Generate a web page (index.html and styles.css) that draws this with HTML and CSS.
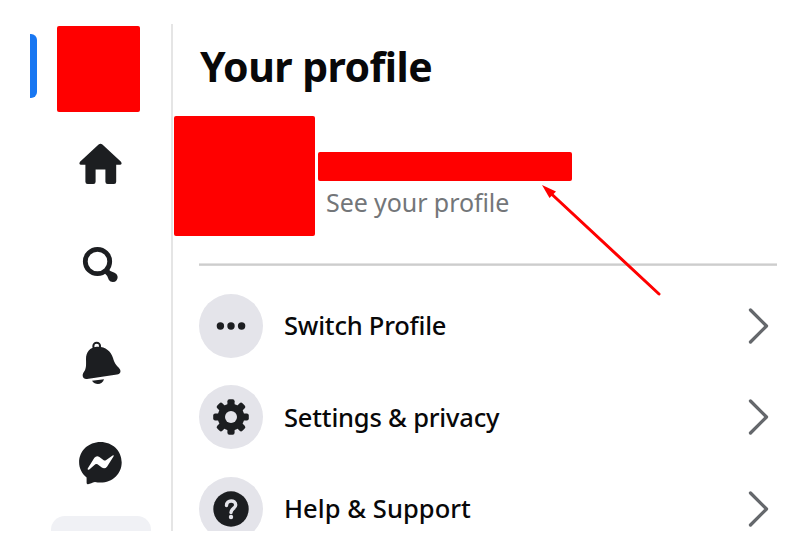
FILE: index.html
```
<!DOCTYPE html>
<html lang="en">
<head>
<meta charset="utf-8">
<title>Your profile</title>
<link rel="stylesheet" href="styles.css">
</head>
<body>
<div class="window">
  <nav class="rail">
    <div class="rail-account">
      <span class="active-bar"></span>
      <span class="avatar-small"></span>
    </div>
    <a class="rail-item"><svg width="60" height="60" viewBox="70 134 60 60"><path d="M98.600 144.500q1.900-1.600 3.800 0l18.600 17.300q1.600 2.700-1 3h-3.800v17q0 2.200-2.200 2.200h-6.400q-2.200 0-2.200-2.200v-12.300h-9.800v12.300q0 2.200-2.200 2.200H87.600q-2.200 0-2.200-2.200v-17h-4.400q-2.600-.3-1-3z"/></svg></a>
    <a class="rail-item"><svg width="60" height="60" viewBox="70 234 60 60"><circle cx="97.500" cy="261.500" r="12.200" fill="none" stroke="#1c1e21" stroke-width="4.800"/><path d="M104.500 273l3.500-4q2 2.500 6.500 3.800a4.800 4.800 0 1 1-5.600 7.200q-1.200-4.500-4.400-7z"/></svg></a>
    <a class="rail-item"><svg width="60" height="60" viewBox="70 334 60 60"><circle cx="96.700" cy="346.200" r="3.400" fill="none" stroke="#1c1e21" stroke-width="2"/><path d="M86 359c0-7 4-11.400 10.500-12.200 8-.8 14.500 4.200 16.500 11.200 1.400 5 3 7 5.800 9.800 3 3.200 1.700 6.200-1.800 6.800l-30 4.300c-4.300.6-5.600-3.800-3-7.100 2.200-3 2.200-6.500 2-12.800z"/><path d="M92 380.800l12-1.500c-1.400 5.500-8.600 6.500-12 1.500z"/></svg></a>
    <a class="rail-item"><svg width="60" height="60" viewBox="70 434 60 60"><path d="M100.500 442c12 0 21.200 8.800 21.200 20.300s-9.200 20.300-21.200 20.300q-3 0-5.500-.5c-3 .7-4.500 2-7 2.200q-1.400 0-1.400-1.500v-5.300c-4.500-3.700-7.500-9-7.500-15.200 0-11.500 9.400-20.300 21.400-20.300z"/><path fill="#fff" d="M87.700 468.500l6.700-10.700q2.100-2.700 5-.9l4.300 3.300q1.100.7 2.200 0l6.700-4.800q1.800-.7.900 1.200l-6.500 10.100q-2.200 2.800-5.200.9l-4.300-3.300q-1.100-.7-2.200 0l-6 5.200q-2 .8-1.600-1z"/></svg></a>
    <div class="rail-selected"></div>
  </nav>
  <main class="panel">
    <h1>Your profile</h1>
    <section class="profile">
      <div class="photo"></div>
      <div class="identity">
        <div class="name"></div>
        <div class="hint">See your profile</div>
      </div>
    </section>
    <hr>
    <div class="row">
      <span class="disc"><svg width="64" height="64" viewBox="-32 -32 64 64"><circle cx="-10.600" r="3.700"/><circle r="3.700"/><circle cx="10.600" r="3.700"/></svg></span>
      <span class="label switch">Switch Profile</span>
      <svg class="chevron" width="22" height="38" viewBox="0 0 22 38"><path d="M3.500 3L19.500 19 3.500 35"/></svg>
    </div>
    <div class="row">
      <span class="disc"><svg width="64" height="64" viewBox="-32 -32 64 64"><g id="teeth"><rect x="-3.600" y="-17.800" width="7.200" height="35.600" rx="2"/><rect x="-17.800" y="-3.600" width="35.600" height="7.200" rx="2"/></g><use href="#teeth" transform="rotate(45)"/><circle r="13.300"/><circle r="6" fill="#e4e4ea"/></svg></span>
      <span class="label settings">Settings &amp; privacy</span>
      <svg class="chevron" width="22" height="38" viewBox="0 0 22 38"><path d="M3.500 3L19.500 19 3.500 35"/></svg>
    </div>
    <div class="row">
      <span class="disc"><svg width="64" height="64" viewBox="-32 -32 64 64"><circle r="17.700"/><path d="M-4.500-3.500C-4.500-9.500 4.700-9.500 4.700-4 4.700-.5 0-.6 0 3.600" fill="none" stroke="#e4e4ea" stroke-width="3.400" stroke-linecap="round"/><circle cy="8" r="2.200" fill="#e4e4ea"/></svg></span>
      <span class="label help">Help &amp; Support</span>
      <svg class="chevron" width="22" height="38" viewBox="0 0 22 38"><path d="M3.500 3L19.500 19 3.500 35"/></svg>
    </div>
  </main>
</div>
<svg class="arrow" width="124" height="116" viewBox="538 182 124 116"><path d="M551 193.500L659 294" stroke="#f00" stroke-width="3" stroke-linecap="round"/><path d="M542 185l14 6.500-6.500 6.500z" fill="#f00"/></svg>
</body>
</html>
```
FILE: styles.css
```
* { box-sizing: border-box; }
body {
  margin: 0;
  background: #fff;
  color: #080809;
  font-family: "Noto Sans", "Open Sans", sans-serif;
}
.window {
  display: flex;
  height: 507px;
  margin: 24px 18px 14px 30px;
  overflow: hidden;
}
.rail {
  flex: none;
  width: 143px;
  border-right: 2px solid #e5e5e5;
}
.rail-account {
  display: flex;
  height: 90px;
  padding-top: 2px;
}
.active-bar {
  width: 7px;
  height: 64px;
  margin: 8px 20px 0 0;
  border-radius: 0 6px 6px 0;
  background: #1877f2;
}
.avatar-small {
  width: 83px;
  height: 86px;
  border-radius: 2px;
  background: #f00;
}
.rail-item {
  display: flex;
  height: 100px;
  padding-left: 40px;
  align-items: center;
}
.rail-item svg { fill: #1c1e21; }
.rail-selected {
  width: 100px;
  height: 100px;
  margin: 2px 0 0 21px;
  border-radius: 14px;
  background: #f0f1f5;
}
.panel { flex: 1; min-width: 0; }
h1 {
  height: 92px;
  margin: 0;
  padding-left: 27px;
  font-size: 41px;
  font-weight: 700;
  letter-spacing: -0.55px;
  line-height: 84px;
  white-space: nowrap;
}
.profile { display: flex; height: 147px; }
.photo {
  width: 141px;
  height: 120px;
  margin-left: 1px;
  border-radius: 2px;
  background: #f00;
}
.identity { padding: 36px 0 0 3px; }
.name {
  width: 254px;
  height: 29px;
  border-radius: 2px;
  background: #f00;
}
.hint {
  padding-left: 8px;
  color: #737679;
  font-size: 25px;
  letter-spacing: -0.08px;
  line-height: 42px;
  white-space: nowrap;
}
hr {
  height: 3px;
  margin: 0 0 14px 26px;
  border: 0;
  background: linear-gradient(#e2e2e2 1px, #cdcdcd 1px 2px, #d6d6d6 2px);
}
.row {
  display: flex;
  height: 91.5px;
  padding: 14px 8px 14px 26px;
  align-items: center;
}
.disc {
  width: 64px;
  height: 64px;
  margin-right: 21px;
  border-radius: 50%;
  background: #e4e4ea;
}
.disc svg { display: block; fill: #1c1e21; }
.label {
  padding-bottom: 1px;
  font-size: 25.5px;
  font-weight: 500;
  line-height: 36px;
  white-space: nowrap;
}
.switch { letter-spacing: -0.22px; }
.settings { letter-spacing: -0.2px; }
.help { letter-spacing: 0.05px; }
.chevron {
  margin-left: auto;
  fill: none;
  stroke: #65686c;
  stroke-width: 3.3;
  stroke-linecap: round;
  stroke-linejoin: round;
}
.arrow {
  position: absolute;
  left: 538px;
  top: 182px;
}
```
